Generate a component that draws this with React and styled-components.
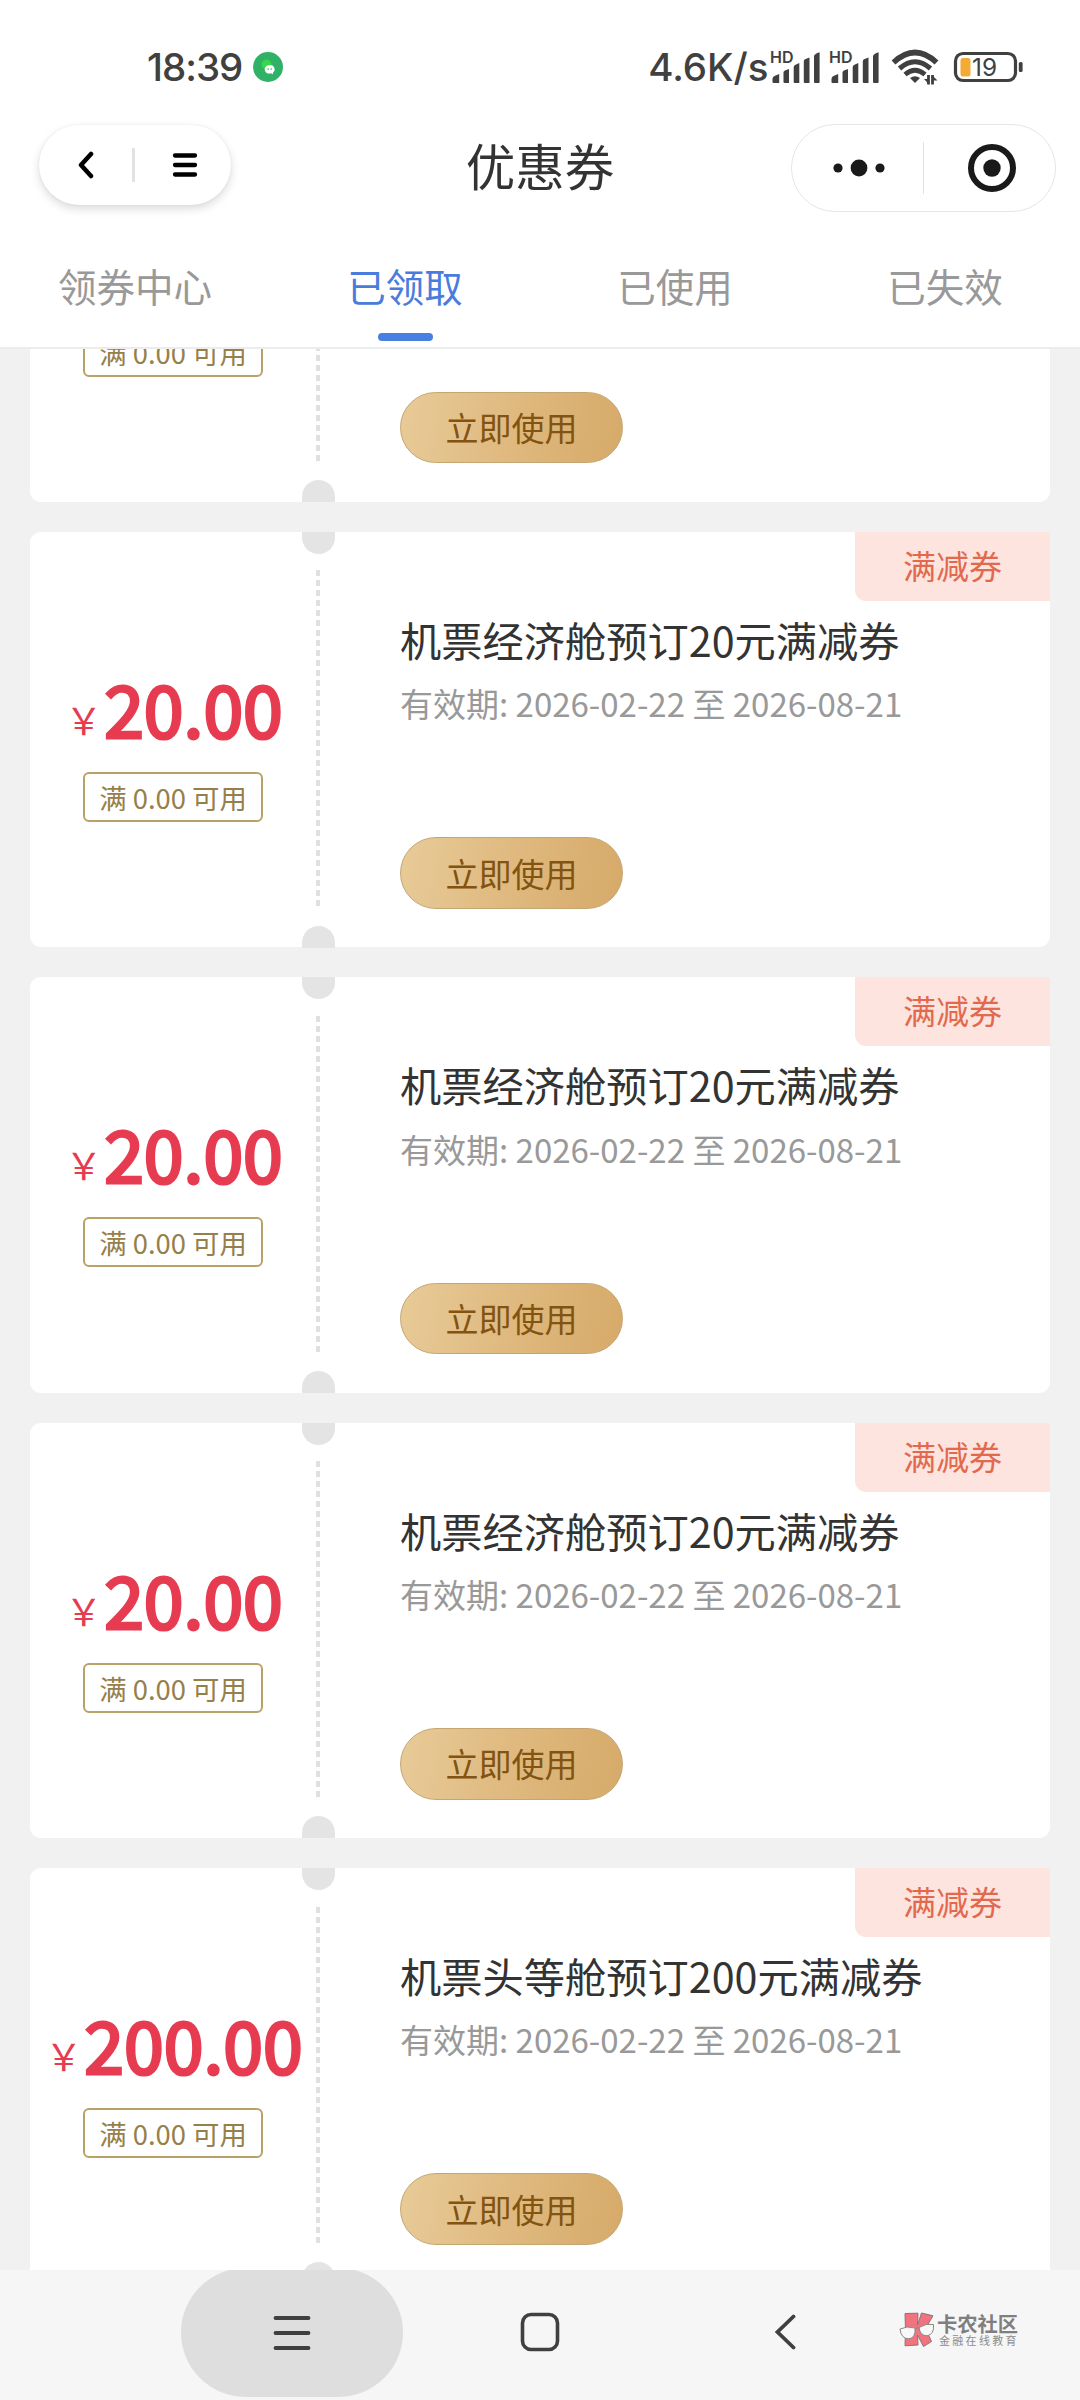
import React from "react";
import styled, { createGlobalStyle } from "styled-components";

const GlobalStyle = createGlobalStyle`
  * {
    box-sizing: border-box;
  }
  body {
    margin: 0;
    background: #f1f1f1;
    font-family: "Noto Sans CJK SC", sans-serif;
  }
  svg {
    display: block;
    flex: none;
  }
`;

const Page = styled.div`
  width: 1080px;
  height: 2400px;
  display: flex;
  flex-direction: column;
  overflow: hidden;
  background: #f1f1f1;
`;

const StatusBar = styled.div`
  height: 104px;
  padding: 30px 57px 0 147px;
  display: flex;
  align-items: center;
  background: #fff;
  color: #404040;
  flex: none;
`;

const StatusText = styled.span`
  font-family: Inter, "Liberation Sans", sans-serif;
  font-size: 38.5px;
  font-weight: 500;
  line-height: 44px;
  letter-spacing: ${(props) => props.$spacing || "0"};
`;

const ChatDot = styled.div`
  width: 30px;
  height: 30px;
  margin-left: 11px;
  margin-right: auto;
`;

const StatusIcons = styled.div`
  display: flex;
  align-items: center;
  margin-left: 1px;
  gap: 9.5px;
`;

const WifiSlot = styled.div`
  margin: 0 5px 0 2px;
`;

const NavBar = styled.div`
  height: 126px;
  padding: 0 24px;
  display: grid;
  grid-template-columns: 1fr auto 1fr;
  align-items: center;
  background: #fff;
  flex: none;
`;

const NavTitle = styled.h1`
  margin: 0;
  font-size: 49.5px;
  font-weight: 400;
  line-height: 60px;
  color: #333;
  padding-bottom: 4px;
`;

const BackPill = styled.div`
  width: 192px;
  height: 80px;
  margin: 0 0 4px 15px;
  padding-left: 38px;
  border-radius: 40px;
  background: #fff;
  box-shadow: 0 4px 10px rgba(0, 0, 0, 0.14), 0 0 3px rgba(0, 0, 0, 0.06);
  display: flex;
  align-items: center;
  gap: 37px;
`;

const Capsule = styled.div`
  width: 265px;
  height: 88px;
  margin-top: 2px;
  justify-self: end;
  border: 1.5px solid #e6e6e6;
  border-radius: 44px;
  background: #fff;
  display: flex;
  align-items: center;
`;

const CapsuleHalf = styled.div`
  width: 131px;
  flex: none;
  display: flex;
  justify-content: center;
  padding-left: ${(props) => props.$shift || 0}px;
`;

const PillLine = styled.div`
  width: ${(props) => props.$w}px;
  height: ${(props) => props.$h}px;
  background: #e2e2e2;
`;

const Tabs = styled.div`
  height: 119px;
  display: flex;
  background: #fff;
  border-bottom: 2px solid #ececec;
  flex: none;
`;

const Tab = styled.div`
  flex: 1;
  padding-top: 30px;
  display: flex;
  flex-direction: column;
  align-items: center;
  font-size: 38.5px;
  line-height: 51px;
  color: ${(props) => (props.$active ? "#4a7ddb" : "#999")};

  &::after {
    content: "";
    width: 55px;
    height: 8px;
    margin-top: 22px;
    border-radius: 4px;
    background: ${(props) => (props.$active ? "#4a7fe2" : "transparent")};
  }
`;

const List = styled.div`
  flex: 1;
  min-height: 0;
  padding: 0 30px;
  overflow: hidden;
`;

// list is scrolled part of the way through the first coupon
const Scrolled = styled.div`
  margin-top: -262.3px;
  display: flex;
  flex-direction: column;
  gap: 30px;
`;

const Card = styled.div`
  position: relative;
  height: 415.4px;
  display: flex;
  background: #fff;
  border-radius: 11px;
  flex: none;
`;

const Worth = styled.div`
  width: 286px;
  padding-top: 129px;
  display: flex;
  flex-direction: column;
  align-items: center;
`;

const Price = styled.div`
  display: flex;
  align-items: baseline;
  justify-content: center;
  white-space: nowrap;
  color: #e63b50;
  font-size: 71.5px;
  line-height: 92px;
  height: 92px;
  padding-left: 2px;
  -webkit-text-stroke: 3px #e63b50;
`;

const Yen = styled.span`
  font-size: 37px;
  margin-right: 2px;
  transform: translateY(-3px);
  -webkit-text-stroke: 0;
`;

const Limit = styled.div`
  width: 180px;
  height: 50px;
  margin-top: 19px;
  border: 2px solid #b8a267;
  border-radius: 6px;
  font-size: 27.4px;
  line-height: 46px;
  text-align: center;
  white-space: nowrap;
  color: #96804a;
`;

const Tear = styled.div`
  width: 4px;
  display: flex;
  flex-direction: column;
  align-items: center;
`;

const Notch = styled.div`
  width: 33px;
  height: 22px;
  flex: none;
  background: #e4e4e4;
  border-radius: ${(props) =>
    props.$bottom ? "16.5px 16.5px 0 0" : "0 0 16.5px 16.5px"};
`;

const Dashes = styled.div`
  width: 4px;
  height: 339px;
  margin: 16.3px 0;
  flex: none;
  background: repeating-linear-gradient(#e0e0e0 0 6px, transparent 6px 10px);
`;

const Detail = styled.div`
  padding: 80px 0 0 80px;
  display: flex;
  flex-direction: column;
  align-items: flex-start;
`;

const CouponName = styled.div`
  font-size: 41.25px;
  line-height: 54px;
  color: #333;
  white-space: nowrap;
`;

const Validity = styled.div`
  margin-top: 15.2px;
  font-size: 33px;
  line-height: 44px;
  color: #999;
  white-space: nowrap;
`;

const UseButton = styled.button`
  width: 223px;
  height: 71.5px;
  margin-top: 112px;
  padding: 0;
  border: 1px solid #c5a671;
  border-radius: 36px;
  background: linear-gradient(100deg, #e8cb98 0%, #dfb97f 50%, #d6aa69 100%);
  font-family: inherit;
  font-size: 33px;
  line-height: 67px;
  color: #835311;
`;

const Badge = styled.div`
  position: absolute;
  top: 0;
  right: 0;
  width: 195px;
  height: 69px;
  border-radius: 0 3px 0 11px;
  background: #fde4df;
  color: #e2694d;
  font-size: 33px;
  line-height: 67px;
  text-align: center;
`;

const SystemNav = styled.div`
  height: 130px;
  padding-left: 181px;
  display: flex;
  align-items: center;
  background: #f6f6f6;
  overflow: hidden;
  flex: none;
`;

const RecentKey = styled.div`
  width: 222px;
  height: 129px;
  margin-bottom: 5px;
  border-radius: 65px;
  background: #dedede;
  display: flex;
  align-items: center;
  justify-content: center;
  flex: none;
`;

const NavKey = styled.div`
  margin-left: ${(props) => props.$gap}px;
  margin-bottom: 6px;
`;

const Watermark = styled.div`
  display: flex;
  align-items: center;
  margin: 0 0 10px 101px;
  gap: 2px;
`;

const MarkText = styled.div`
  color: #7f7f7f;
  font-size: 20.3px;
  font-weight: 700;
  line-height: 20px;
  white-space: nowrap;
`;

const MarkSub = styled.div`
  margin: 1px 0 0 2px;
  font-size: 11px;
  font-weight: 400;
  line-height: 13px;
  letter-spacing: 2.3px;
  color: #8c8c8c;
`;

function Signal() {
  return (
    <svg width="50" height="34" viewBox="0 0 50 34" fill="#404040">
      <text
        x="0"
        y="13"
        fontFamily="Inter, sans-serif"
        fontSize="15.500"
        fontWeight="600"
        textLength="23.500"
        lengthAdjust="spacingAndGlyphs"
      >
        HD
      </text>
      <path d="M2.500 28.500 Q3 26.500 5 25.800 L9.200 24 V33 H3.500 Q2.500 33 2.500 32Z" />
      <path d="M13.500 22 Q13.700 21 15 20.500 L19 19 V33 H14.500 Q13.500 33 13.500 32Z" />
      <path d="M23.700 17 Q24 15.500 25 15 L29.300 13 V33 H24.700 Q23.700 33 23.700 32Z" />
      <path d="M33.800 11 Q34 9.800 35 9.300 L39.500 7.500 V33 H34.800 Q33.800 33 33.800 32Z" />
      <path d="M44 6 Q44.500 4 49.600 2.300 V32 Q49.600 33 48.600 33 H45 Q44 33 44 32Z" />
    </svg>
  );
}

function Wifi() {
  return (
    <svg width="48" height="36" viewBox="0 0 48 36" fill="none" stroke="#404040">
      <path d="M2.500 13.500 Q24 -6.500 45.500 13.500" strokeWidth="5.600" />
      <path d="M8.500 19.500 Q24 6 39.500 19.500" strokeWidth="5" />
      <path d="M14 25.500 Q24 17 34 25.500" strokeWidth="4.800" />
      <path d="M19 29 Q24 25.500 29 29 L24 34Z" fill="#404040" stroke="none" />
      <path d="M37.500 26 V35.500 M41.500 35.500 V26" strokeWidth="2.800" />
      <path d="M38 35.500 L33 30 H38Z M41 26 L46.500 31.500 H41Z" fill="#404040" stroke="none" />
    </svg>
  );
}

function Battery() {
  return (
    <svg width="70" height="32" viewBox="0 0 70 32">
      <rect x="2.500" y="2.500" width="60" height="27" rx="7.500" fill="none" stroke="#404040" strokeWidth="3.200" />
      <rect x="65.800" y="11" width="3.800" height="10" rx="1.500" fill="#404040" />
      <rect x="7.500" y="7" width="10" height="18.500" rx="2.500" fill="#f3ab35" />
      <text x="19" y="24.500" fontFamily="Inter, sans-serif" fontSize="24" fontWeight="400" fill="#404040" textLength="25" lengthAdjust="spacingAndGlyphs">
        19
      </text>
    </svg>
  );
}

function CommunityLogo() {
  return (
    <svg width="36" height="36" viewBox="0 0 36 36">
      <g fill="#f27380" stroke="#8b7377" strokeWidth="1">
        <path d="M6 1.500 L19 1.200 L18.500 13 L22.500 1 L34 3.800 L26.500 16.500 L32.500 29.500 L24.500 34.500 L18.500 23 L19 33 L6 33.800 L6.500 18Z" />
      </g>
      <g fill="#f8f8f8" stroke="#8a8a8a" strokeWidth="1">
        <path d="M1 17 Q8 13.500 16 16 Q17 26 9.500 26.800 Q2 26.500 1 17Z" />
        <path d="M20 15.500 Q27 11 34.500 12.500 Q35.500 22.500 28 23.800 Q21 23.500 20 15.500Z" />
      </g>
      <path d="M16 17 Q18 15 20 16" fill="none" stroke="#8a8a8a" />
    </svg>
  );
}

const tabs = ["领券中心", "已领取", "已使用", "已失效"];

const coupons = [
  { id: 1, price: "20.00", name: "机票经济舱预订20元满减券" },
  { id: 2, price: "20.00", name: "机票经济舱预订20元满减券" },
  { id: 3, price: "20.00", name: "机票经济舱预订20元满减券" },
  { id: 4, price: "20.00", name: "机票经济舱预订20元满减券" },
  { id: 5, price: "200.00", name: "机票头等舱预订200元满减券" },
];

function Coupon({ data }) {
  return (
    <Card>
      <Worth>
        <Price>
          <Yen>￥</Yen>
          {data.price}
        </Price>
        <Limit>满 0.00 可用</Limit>
      </Worth>
      <Tear>
        <Notch />
        <Dashes />
        <Notch $bottom />
      </Tear>
      <Detail>
        <CouponName>{data.name}</CouponName>
        <Validity>有效期: 2026-02-22 至 2026-08-21</Validity>
        <UseButton>立即使用</UseButton>
      </Detail>
      <Badge>满减券</Badge>
    </Card>
  );
}

function App() {
  return (
    <Page>
      <GlobalStyle />
      <StatusBar>
        <StatusText $spacing="-1px">18:39</StatusText>
        <ChatDot>
          <svg width="30" height="30" viewBox="0 0 30 30">
            <circle cx="15" cy="15" r="15" fill="#2fb167" />
            <circle cx="13.500" cy="12.500" r="5" fill="#37d64b" />
            <path d="M16.500 13.200 a4.500 4.200 0 1 0 1 8.200 h1.500 l1 1 v-1.800 a4.200 4.200 0 0 0 -3.500 -7.400Z" fill="#fff" />
            <circle cx="15.200" cy="17" r="0.800" fill="#2fb167" />
            <circle cx="18.200" cy="17" r="0.800" fill="#2fb167" />
          </svg>
        </ChatDot>
        <StatusText>4.6K/s</StatusText>
        <StatusIcons>
          <Signal />
          <Signal />
          <WifiSlot>
            <Wifi />
          </WifiSlot>
          <Battery />
        </StatusIcons>
      </StatusBar>

      <NavBar>
        <BackPill>
          <svg width="18" height="28" viewBox="0 0 18 28" fill="none" stroke="#000" strokeWidth="4.500" strokeLinecap="round" strokeLinejoin="round">
            <path d="M14 3 L4 14 L14 25" />
          </svg>
          <PillLine $w={3} $h={34} />
          <svg width="26" height="26" viewBox="0 0 26 26" stroke="#000" strokeWidth="4.300" strokeLinecap="round">
            <path d="M3 3.500 H23 M3 13 H23 M3 22.500 H23" />
          </svg>
        </BackPill>
        <NavTitle>优惠券</NavTitle>
        <Capsule>
          <CapsuleHalf $shift={2}>
            <svg width="52" height="18" viewBox="0 0 52 18" fill="#1a1a1a">
              <circle cx="5" cy="9" r="4.600" />
              <circle cx="26" cy="9" r="8.400" />
              <circle cx="47" cy="9" r="4.600" />
            </svg>
          </CapsuleHalf>
          <PillLine $w={1.5} $h={52} />
          <CapsuleHalf $shift={4}>
            <svg width="50" height="50" viewBox="0 0 50 50">
              <circle cx="25" cy="25" r="21" fill="none" stroke="#1a1a1a" strokeWidth="6" />
              <circle cx="25" cy="25" r="8.700" fill="#1a1a1a" />
            </svg>
          </CapsuleHalf>
        </Capsule>
      </NavBar>

      <Tabs>
        {tabs.map((name) => (
          <Tab key={name} $active={name === "已领取"}>
            {name}
          </Tab>
        ))}
      </Tabs>

      <List>
        <Scrolled>
          {coupons.map((data) => (
            <Coupon key={data.id} data={data} />
          ))}
        </Scrolled>
      </List>

      <SystemNav>
        <RecentKey>
          <svg width="38" height="34" viewBox="0 0 38 34" stroke="#404040" strokeWidth="3.800" strokeLinecap="round">
            <path d="M2.500 2 H35.500 M2.500 17 H35.500 M2.500 32 H35.500" />
          </svg>
        </RecentKey>
        <NavKey $gap={117}>
          <svg width="40" height="40" viewBox="0 0 40 40">
            <rect x="2.500" y="2.500" width="35" height="35" rx="8.500" fill="none" stroke="#404040" strokeWidth="3.600" />
          </svg>
        </NavKey>
        <NavKey $gap={214}>
          <svg width="24" height="36" viewBox="0 0 24 36" fill="none" stroke="#404040" strokeWidth="3.800" strokeLinecap="round">
            <path d="M19.500 2.500 L3.500 18 L19.500 33.500" />
          </svg>
        </NavKey>
        <Watermark>
          <CommunityLogo />
          <div>
            <MarkText>卡农社区</MarkText>
            <MarkSub>金融在线教育</MarkSub>
          </div>
        </Watermark>
      </SystemNav>
    </Page>
  );
}

export default App;
